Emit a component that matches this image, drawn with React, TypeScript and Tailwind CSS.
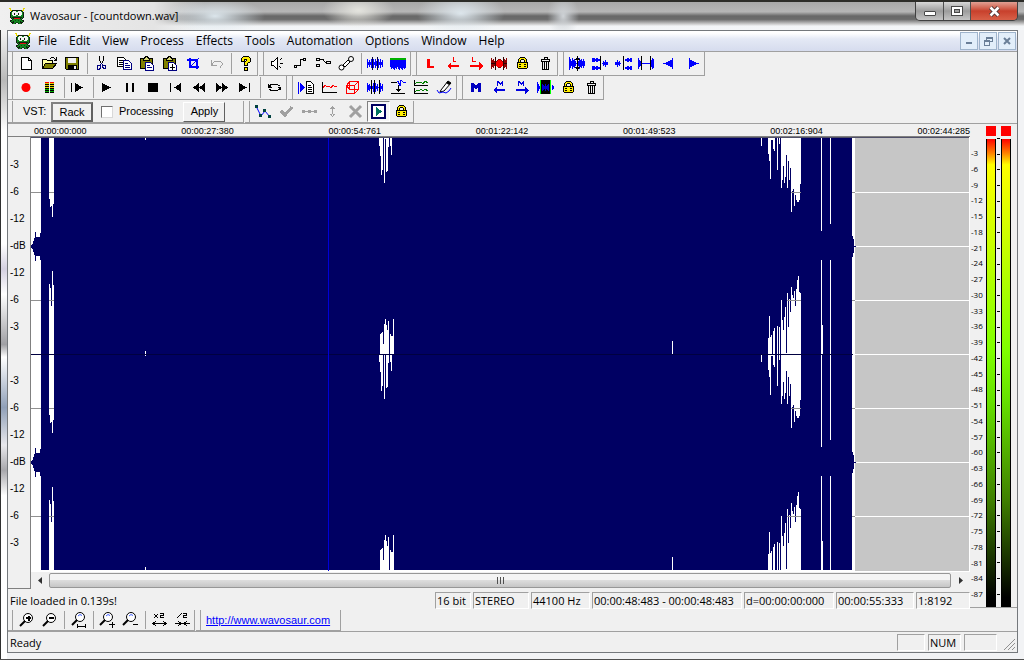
import type { ReactNode } from 'react'
import { clsx } from 'clsx'

const MENUS = [
  'File',
  'Edit',
  'View',
  'Process',
  'Effects',
  'Tools',
  'Automation',
  'Options',
  'Window',
  'Help',
]

const TIMES = [
  '00:00:00:000',
  '00:00:27:380',
  '00:00:54:761',
  '00:01:22:142',
  '00:01:49:523',
  '00:02:16:904',
  '00:02:44:285',
]

const SCALE = ['-3', '-6', '-12', '-dB', '-12', '-6', '-3', '', '-3', '-6', '-12', '-dB', '-12', '-6', '-3']

const METER_LEVELS = Array.from({ length: 29 }, (_, i) => (i + 1) * -3)

const BLUE = '#0000ff'
const OLIVE = '#808000'
const RED = '#ff0000'

/* ---------- icons ---------- */

function Pixels({ rows, colors, x = 0, y = 0 }: { rows: string[]; colors: Record<string, string>; x?: number; y?: number }) {
  return (
    <g>
      {rows.flatMap((row, r) =>
        [...row].map((c, i) =>
          colors[c] ? <rect key={`${r}-${i}`} x={x + i} y={y + r} width="1" height="1" fill={colors[c]} /> : null,
        ),
      )}
    </g>
  )
}

// Column of vertical samples centred on y = 8
function Bars({ x, h, color = BLUE }: { x: number; h: number[]; color?: string }) {
  return (
    <g fill={color}>
      {h.map((v, i) => (
        <rect key={i} x={x + i} y={8 - v} width="1" height={v * 2 + 1} />
      ))}
    </g>
  )
}

const DINO_COLORS = { y: '#e8d800', k: '#102010', g: '#12851f', d: '#0a4a12', w: '#f4f4f4', r: '#e01010' }
const DINO = [
  'yy............yy',
  '.y............y.',
  '.yykkkkkkkkkkyy.',
  '..kgwwwggwwwgk..',
  '.kgwwwwwwwwwwgk.',
  '.kgwwkwwwkwwwgk.',
  '.kgwwkwwwkwwwgk.',
  '.kggwwwggwwwggk.',
  '.kggggggggggggk.',
  '.kgkkkkkkkkkkgk.',
  '..kgkrrrrrrkgk..',
  '...kggggggggk...',
  '.kkgggdggdgggkk.',
  '.kggkggggggkggk.',
  '..kkkggddggkkk..',
  '...kggk..kggk...',
]

function Dino() {
  return (
    <svg width="16" height="16" viewBox="0 0 16 16" shapeRendering="crispEdges" className="shrink-0" aria-hidden>
      <Pixels rows={DINO} colors={DINO_COLORS} />
    </svg>
  )
}

const clipboard = (
  <>
    <path d="M1.500 3.500h12v10h-12z" fill={OLIVE} stroke="#000" />
    <path d="M4.500 3.500h1l1-2h2l1 2h1v2h-6z" fill="#d8d87a" stroke="#000" />
    <path d="M6.500 7.500h5l3 3v5h-8z" fill="#fff" stroke="#000080" />
  </>
)

const trash = (
  <g fill="none" stroke="#000">
    <path d="M4 4.500h9M7 4V2.500h3V4M4.500 5v1.500h8V5M5.500 6.500v8h6v-8M7.500 7v7M9.500 7v7" />
  </g>
)

const LOCK = [
  '...kkkkk...',
  '..kyyyyyk..',
  '.kyykkkyyk.',
  '.kyk...kyk.',
  '.kyk...kyk.',
  'kkkkkkkkkkk',
  'kyyyyyyyyyk',
  'kykkyyykkyk',
  'kyyyyyyyyyk',
  'kykkyyykkyk',
  'kyyyyyyyyyk',
  '.kkkkkkkkk.',
]

const lock = <Pixels rows={LOCK} colors={{ k: '#000', y: '#ffee00' }} x={3} y={2} />

const lens = (cx: number, cy: number) => (
  <>
    <circle cx={cx} cy={cy} r="4.5" fill="#fff" stroke="#000" shapeRendering="auto" />
    <path d={`M${cx - 3} ${cy + 3}L${cx - 8} ${cy + 8}`} stroke="#000" strokeWidth="2" shapeRendering="auto" />
  </>
)

const lensGlint = (cx: number, cy: number) => (
  <path d={`M${cx - 2} ${cy - 1}l2-1.500 2 1`} fill="none" stroke="#4060ff" shapeRendering="auto" />
)

const ICONS: Record<string, ReactNode> = {
  new: <path d="M3.500 2.500h7l3 3v9h-10zM10.500 2.500v3h3" fill="#fff" stroke="#000" />,
  open: (
    <>
      <path d="M1.500 13.500v-9h4l1 1h5v3" fill="#ffffa0" stroke="#000" />
      <path d="M1.500 13.500l3-5h11l-4 5z" fill={OLIVE} stroke="#000" />
      <path d="M9 3.500h1M10 2.500h3M13 3.500h1M14 4.500h2M13 5.500h3M15.500 2v3" stroke="#000" fill="none" />
    </>
  ),
  save: (
    <>
      <path d="M1.500 2.500h13v12h-12l-1-1z" fill={OLIVE} stroke="#000" />
      <path d="M4 3h8v5H4z" fill="#f0f0f0" />
      <path d="M4 10h9v4H4z" fill="#000" />
      <path d="M10 11h2v3h-2z" fill="#f0f0f0" />
    </>
  ),
  cut: (
    <g fill="none">
      <path d="M6.500 1v4l1 2 1 2M10.500 1v4l-1 2-1 2" stroke="#000" />
      <path d="M8.500 8l-1 2h-2l-1 1v3h2l1-1v-3M8.500 8l1 2h2l1 1v2h-2l-1-1v-2" stroke="#000080" />
    </g>
  ),
  copy: (
    <>
      <path d="M1.500 2.500h6l2 2v7h-8z" fill="#fff" stroke="#000" />
      <path d="M3 5.500h4M3 7.500h4M3 9.500h4" stroke="#000" />
      <path d="M7.500 5.500h5l3 3v6h-8z" fill="#fff" stroke="#000080" />
      <path d="M9 8.500h3M9 10.500h5M9 12.500h5" stroke="#000080" />
    </>
  ),
  paste: (
    <>
      {clipboard}
      <path d="M8 10.500h3M8 12.500h5" stroke="#000080" />
    </>
  ),
  pasteNew: (
    <>
      {clipboard}
      <path d="M10.500 9v6M8 12.500h5" stroke="#000" />
    </>
  ),
  crop: (
    <>
      <path d="M5 3v9h9M2 5h10v9" fill="none" stroke={BLUE} strokeWidth="2" />
      <path d="M5 12L14 3" stroke={BLUE} />
    </>
  ),
  undo: <path d="M3.500 5v5h5M4 9.500l2-2.500 2-1h4l2 2v2l-2 2.500" fill="none" stroke="#a0a0a0" />,
  help: (
    <g stroke="#000" fill="#ffee00">
      <path d="M4.500 6.500v-3l2-2h5l2 2v3l-3 2v2h-3v-3l2-2v-1h-2v2zM7.500 12.500h3v3h-3z" />
    </g>
  ),
  speaker: (
    <>
      <path d="M2.500 6.500h2l4-4v12l-4-4h-2z" fill="#fff" stroke="#000" />
      <path d="M10.500 5.500l2-2M10.500 8.500h3M10.500 11.500l2 2" stroke="#000" />
    </>
  ),
  fadeIn: (
    <g fill="none" stroke="#000">
      <path d="M2.500 10.500h2v2h-2zM11.500 3.500h2v2h-2zM5 10.500h3.500v-6H11" />
    </g>
  ),
  fadeOut: (
    <g fill="none" stroke="#000">
      <path d="M1.500 3.500h3v2h-3zM1.500 9.500h3v2h-3zM5 4.500h3l2 2.500h2M11.500 6.500h4v2h-4z" />
    </g>
  ),
  chain: (
    <g fill="#fff" stroke="#000" shapeRendering="auto">
      <circle cx="3.500" cy="12.500" r="2.500" />
      <circle cx="13" cy="4" r="2.500" />
      <path d="M5 10l5-5 2 2-5 5z" />
    </g>
  ),
  wave1: (
    <>
      <Bars x={0} h={[4, 1, 3, 1, 4, 1, 4, 1, 4, 2, 1, 4, 1, 4, 1, 3]} />
      <path d="M5.500 2v13M10.500 2v13" stroke="#000040" />
    </>
  ),
  wave2: (
    <>
      <Bars x={0} h={[3, 5, 4, 5, 6, 4, 5, 3, 5, 6, 4, 5, 6, 4, 5, 4]} />
      <path d="M0 0h17v3H0z" fill="#f0f0f0" />
      <path d="M0 4h16" stroke="#00b000" strokeWidth="2" />
    </>
  ),
  l: <path d="M5 4h3v7h4v2H5z" fill={RED} />,
  lLeft: <path d="M8 2h1v4h2v1H8zM2 11l4-4v3h8v2H6v3z" fill={RED} />,
  lRight: <path d="M4 2h1v4h3v1H4zM15 11l-4-4v3H2v2h9v3z" fill={RED} />,
  waveCut: (
    <>
      <Bars x={0} h={[5, 3, 4, 2, 2, 2, 3, 4, 4, 4, 3, 2, 2, 4, 3, 5]} color="#900000" />
      <circle cx="8.500" cy="8.500" r="3.500" fill={RED} />
      <path d="M4.500 2v13M12.500 2v13M0 8.500h5M12 8.500h4" stroke="#300000" />
    </>
  ),
  lock,
  trash,
  zoomWave: (
    <>
      <Bars x={0} h={[6, 4, 2, 5, 3, 4, 2, 0, 0, 2, 5, 3, 4, 2, 4, 2]} />
      <path d="M8.500 1v15M7 3.500h3M6 4.500h5M7 13.500h3M6 12.500h5" stroke="#000" />
    </>
  ),
  spread: (
    <>
      <path d="M0 3h2v1h2v-1h1v1h2v1H5v1H4V5H2v1H0zM0 11h2v1h2v-1h1v1h2v1H5v1H4v-1H2v1H0z" fill={BLUE} stroke={BLUE} />
      <Bars x={10} h={[0, 2, 1, 3, 1, 1]} />
      <path d="M8.500 1v14" stroke="#000" />
    </>
  ),
  join: (
    <>
      <Bars x={0} h={[1, 1, 3, 1, 2, 0]} />
      <path d="M10 4h2v-1h1v1h2v-1h1v3h-1V5h-2v1h-1V5h-2zM10 12h2v-1h1v1h2v-1h1v3h-1v-1h-2v1h-1v-1h-2z" fill={BLUE} stroke={BLUE} />
      <path d="M8.500 1v14" stroke="#000" />
    </>
  ),
  between: (
    <>
      <Bars x={0} h={[5, 3, 2, 0, 0, 0, 0, 0, 0, 0, 0, 0, 2, 3, 5, 4]} />
      <path d="M3.500 1v14M12.500 1v14" stroke="#000" />
    </>
  ),
  prev: <path d="M2 8h3V7h2V6h2V5h2V3h1v11h-1v-2H9v-1H7v-1H5V9H2z" fill={BLUE} />,
  next: <path d="M15 8h-3V7h-2V6H8V5H6V3H5v11h1v-2h2v-1h2v-1h2V9h3z" fill={BLUE} />,
  record: <circle cx="8" cy="8.500" r="4.500" fill={RED} shapeRendering="auto" />,
  vu: (
    <g fill="none" strokeWidth="4">
      <path d="M6 3v11M11 3v11" stroke="#000" />
      <path d="M6 4v5M11 4v5" stroke="#e0d000" strokeDasharray="1 1" />
      <path d="M6 10v4M11 10v4" stroke="#00b000" strokeDasharray="1 1" />
      <path d="M6 3v1M11 3v1" stroke={RED} />
      <path d="M8.500 3v11" stroke="#f0f0f0" strokeWidth="1" />
    </g>
  ),
  playFrom: (
    <>
      <path d="M1.500 4v9" stroke="#000" />
      <path d="M5 4v9l8-4.500z" />
    </>
  ),
  play: <path d="M3 4v9l9-4.500z" />,
  pause: <path d="M4 4h2v9H4zM10 4h2v9h-2z" />,
  stop: <path d="M3 4h10v9H3z" />,
  toStart: <path d="M2 4h1v9H2zM13 4v9L6 8.500z" />,
  rewind: <path d="M8 4v9L2 8.500zM14 4v9L8 8.500z" />,
  forward: <path d="M2 4v9l6-4.500zM8 4v9l6-4.500z" />,
  toEnd: <path d="M2 4v9l8-4.500zM12 4h1v9h-1z" />,
  loop: (
    <g fill="none" stroke="#000">
      <path d="M3.500 7V6.500l2-1h6l2 1.500M13.500 10l-2 1.500h-6l-2-1" />
      <path d="M2 5v4h4zM15 12V8h-4z" fill="#000" stroke="none" />
    </g>
  ),
  insert: (
    <>
      <path d="M0 3h1v12H0zM2 4l5 4.500L2 13z" fill={BLUE} />
      <path d="M8.500 2.500h4l3 3v9h-7z" fill="#fff" stroke="#000" />
      <path d="M10 6.500h3M10 8.500h4M10 10.500h4M10 12.500h4" stroke="#000" />
    </>
  ),
  graph: (
    <>
      <path d="M1.500 3v10.500H16" fill="none" stroke="#000" />
      <path d="M2 9l2-3 2 2 2-1 2 2 2-3 2 2 2-1" fill="none" stroke={RED} />
    </>
  ),
  cube: (
    <path
      d="M5.500 2.500h9v8h-9zM2.500 6.500h8v8h-8zM2.500 6.500l3-4M10.500 6.500l4-4M2.500 6.500l3 4M10.500 14.500l4-4"
      fill="none"
      stroke={RED}
    />
  ),
  waves3: (
    <>
      <Bars x={0} h={[4, 2, 3, 1, 0, 1, 4, 0, 4, 1, 3, 0, 2, 4, 1, 3]} />
      <path d="M4.500 1v14M7.500 1v14M12.500 1v14" stroke="#000" />
    </>
  ),
  normalize: (
    <>
      <path d="M1 3.500h6M1 14.500h14M8.500 6v7M6 10.500h5M7 11.500h3" stroke="#000" />
      <path d="M7 3l1-1 2 5 1-6 2 2h3" fill="none" stroke={BLUE} />
    </>
  ),
  spectrum: (
    <>
      <path d="M1.500 1v5.500H15M1.500 9v5.500H15" fill="none" stroke="#000" />
      <path d="M2 5l2-2 2 1 2-1 2 2 2-3 3 2M2 13l2-2 2 1 2-2 2 2 2-2 3 2" fill="none" stroke="#008000" />
    </>
  ),
  pencil: (
    <g shapeRendering="auto">
      <path d="M5 11l7-9 3 2-7 8-4 1z" fill="#fff" stroke="#000" />
      <path d="M12 2l3 2-2 2-3-2z" />
      <path d="M1 11l2 3 4-1 3 1 3-2 2-3" fill="none" stroke={BLUE} />
    </g>
  ),
  m: <path d="M3 4h3l2 3 2-3h3v9h-3V8l-1 2H7L6 8v5H3z" fill="#0000c0" />,
  mLeft: <path d="M6 2h1l2 2 2-2h1v5h-1V4L9 6 7 4v3H6zM2 11l4-3v2h8v2H6v3z" fill="#0000e0" />,
  mRight: <path d="M4 2h1l2 2 2-2h1v5H9V4L7 6 5 4v3H4zM15 11l-4-3v2H2v2h9v3z" fill="#0000e0" />,
  selection: (
    <>
      <Bars x={0} h={[5, 3, 1]} />
      <path d="M3 1h10v14H3z" fill="#000" />
      <Bars x={5} h={[3, 2, 1, 3, 1, 2, 3]} color="#0000d0" />
      <path d="M3.500 1v14M13.500 1v14" stroke="#00ff00" />
      <Bars x={15} h={[2, 1]} />
    </>
  ),
  envelope: (
    <>
      <path d="M1 3l5 10 4-5 5 6" fill="none" stroke={BLUE} shapeRendering="auto" />
      <path d="M0 2h3v3H0zM4 11h3v3H4zM8 6h3v3H8zM13 12h3v3h-3z" fill="#004040" />
    </>
  ),
  check: <path d="M3 8l4 4 7-8" fill="none" stroke="#a0a0a0" strokeWidth="3" />,
  dots: <path d="M1 7h3v3H1zM7 7h3v3H7zM13 7h3v3h-3zM4 8h9v1H4z" fill="#a0a0a0" />,
  updown: <path d="M8 4h1v9H8zM5 6l3.500-3L12 6zM5 11l3.500 3 3.500-3z" fill="#a0a0a0" />,
  cross: <path d="M3 3l11 11M14 3L3 14" stroke="#a0a0a0" strokeWidth="3" shapeRendering="auto" />,
  playBox: (
    <>
      <path d="M2 2h13v13H2z" fill="#fff" stroke="#000060" strokeWidth="2" />
      <path d="M6 4v9l6-4.500z" fill="#007060" />
    </>
  ),
  zoomIn: (
    <>
      {lens(10, 6)}
      <path d="M8 6h5M10.500 4v5" stroke="#000" strokeWidth="2" />
    </>
  ),
  zoomOut: (
    <>
      {lens(10, 6)}
      <path d="M8 6h5" stroke="#000" strokeWidth="2" />
    </>
  ),
  zoomSel: (
    <>
      {lens(10, 5)}
      {lensGlint(10, 5)}
      <path d="M7.500 12v4M15.500 12v4M8 14h8" stroke="#000" strokeWidth="1" />
    </>
  ),
  zoomVIn: (
    <>
      {lens(9, 5)}
      {lensGlint(9, 5)}
      <path d="M10 12.500h6M13.500 10v6" stroke="#000" />
    </>
  ),
  zoomVOut: (
    <>
      {lens(9, 5)}
      {lensGlint(9, 5)}
      <path d="M11 12.500h5" stroke="#000" />
    </>
  ),
  x2: (
    <g fill="none" stroke="#000">
      <path d="M3 2l4 4M7 2L3 6M9 1.500h3.500v2H9.500v2H13M2 11.500h13M5 9l-3 2.500L5 14M12 9l3 2.500L12 14" />
    </g>
  ),
  half: (
    <g fill="none" stroke="#000">
      <path d="M3 6l5-5M9 1.500h3.500v2H9.500v2H13M1 11.500h15M4 9l3 2.500L4 14M13 9l-3 2.500 3 2.500" />
    </g>
  ),
}

/* ---------- toolbars ---------- */

function ToolButton({ name, pressed }: { name: string; pressed?: boolean }) {
  return (
    <button
      type="button"
      aria-label={name}
      className={clsx(
        'flex h-full w-[23px] shrink-0 items-center justify-center',
        pressed && 'border border-r-white border-b-white border-l-[#808080] border-t-[#808080] bg-[#f6f6f6]',
      )}
    >
      <svg width="17" height="17" viewBox="0 0 17 17" shapeRendering="crispEdges" className="shrink-0" aria-hidden>
        {ICONS[name]}
      </svg>
    </button>
  )
}

function Group({ items, children }: { items?: string[]; children?: ReactNode }) {
  return (
    <div className="mr-px flex h-full border-r border-b border-[#a0a0a0]">
      <div className="w-[7px] shrink-0 pl-[2px]">
        <div className="h-full w-[3px] border-r border-[#a0a0a0]" />
      </div>
      {items?.map((item, i) =>
        item === '|' ? (
          <div key={i} className="flex w-[6px] justify-center py-px">
            <div className="w-px bg-[#a0a0a0]" />
          </div>
        ) : (
          <ToolButton key={i} name={item} pressed={item === 'playBox'} />
        ),
      )}
      {children}
    </div>
  )
}

function Toolbars() {
  return (
    <div className="border-b border-[#a0a0a0]">
      <div className="flex h-6">
        <Group items={['new', 'open', 'save', '|', 'cut', 'copy', 'paste', 'pasteNew', 'crop', 'undo', '|', 'help']} />
        <Group items={['speaker', 'fadeIn', 'fadeOut', 'chain', '|', 'wave1', 'wave2']} />
        <Group items={['l', 'lLeft', 'lRight', 'waveCut', 'lock', 'trash']} />
        <Group items={['zoomWave', 'spread', 'join', 'between', 'prev', 'next']} />
      </div>
      <div className="flex h-6">
        <Group
          items={['record', 'vu', '|', 'playFrom', '|', 'play', 'pause', 'stop', 'toStart', 'rewind', 'forward', 'toEnd', '|', 'loop']}
        />
        <Group items={['insert', 'graph', 'cube', 'waves3', 'normalize', 'spectrum', 'pencil']} />
        <Group items={['m', 'mLeft', 'mRight', 'selection', 'lock', 'trash']} />
      </div>
      <div className="flex h-[23px] pt-px">
        <Group>
          <div className="flex w-[228px] items-center pl-2 font-['Liberation_Sans',sans-serif] text-[11px]">
            <span className="w-[28px]">VST:</span>
            <button
              type="button"
              className="h-5 w-[42px] border-2 border-t-[#808080] border-r-[#606060] border-b-[#606060] border-l-[#808080] bg-[#f0f0f0]"
            >
              Rack
            </button>
            <label className="ml-2 flex items-center gap-[6px]">
              <input
                type="checkbox"
                className="h-3 w-3 appearance-none border border-t-[#707070] border-r-[#d8d8d8] border-b-[#d8d8d8] border-l-[#707070] bg-white"
              />
              Processing
            </label>
            <button
              type="button"
              className="ml-[10px] h-5 w-[42px] border border-t-white border-r-[#606060] border-b-[#606060] border-l-white bg-[#f0f0f0]"
            >
              Apply
            </button>
          </div>
        </Group>
        <Group items={['envelope', 'check', 'dots', 'updown', 'cross', 'playBox', 'lock']} />
      </div>
    </div>
  )
}

/* ---------- waveform ---------- */

// Silent gaps in one channel (216 units tall): [x, end of the upper gap, start of the lower gap]
const GAPS: [number, number, number][] = [
  [49, 61, 146],
  [50, 69, 150],
  [51, 68, 168],
  [52, 79, 133],
  [53, 66, 147],
  [145, 2, 213],
  [379, 8, 216],
  [380, 18, 196],
  [381, 37, 195],
  [382, 32, 194],
  [383, 0, 206],
  [384, 45, 186],
  [385, 1, 181],
  [386, 34, 187],
  [387, 33, 192],
  [388, 9, 183],
  [390, 8, 196],
  [391, 17, 198],
  [392, 0, 198],
  [393, 0, 181],
  [672, 0, 203],
  [761, 8, 216],
  [768, 16, 200],
  [769, 23, 178],
  [770, 41, 199],
  [771, 2, 197],
  [772, 2, 216],
  [773, 11, 193],
  [774, 13, 190],
  [777, 32, 188],
  [779, 6, 189],
  [781, 50, 162],
  [782, 42, 182],
  [783, 28, 192],
  [784, 45, 179],
  [785, 39, 169],
  [786, 17, 215],
  [787, 50, 155],
  [788, 23, 189],
  [789, 42, 161],
  [790, 30, 174],
  [791, 74, 149],
  [792, 53, 157],
  [793, 51, 160],
  [794, 68, 153],
  [795, 57, 168],
  [796, 62, 151],
  [797, 64, 142],
  [798, 64, 138],
  [799, 62, 154],
  [800, 46, 155],
  [821, 93, 122],
  [822, 0, 187],
  [830, 86, 122],
]

const INTRO = [1, 2, 5, 8, 14, 9, 9, 9, 9, 13]

function Channel({ top }: { top: number }) {
  return (
    <g transform={`translate(0 ${top})`}>
      <rect x="41" y="0" width="811" height="216" fill="#000063" />
      <rect x="852" y="98" width="1" height="21" fill="#000063" />
      <rect x="853" y="101" width="1" height="14" fill="#000063" />
      <rect x="854" y="108" width="2" height="1" fill="#000063" />
      {INTRO.map((v, i) => (
        <rect key={i} x={31 + i} y={108 - v} width="1" height={v * 2 + 1} fill="#000063" />
      ))}
      {GAPS.map(([x, up, down]) => (
        <g key={x} fill="#fff">
          <rect x={x} y="0" width="1" height={up} />
          <rect x={x} y={down} width="1" height={216 - down} />
        </g>
      ))}
      <path d="M31 54.500h10M49 54.500h5M791 54.500h10M852 54.500h3M31 162.500h10M49 162.500h5M787 162.500h14M852 162.500h3" stroke="#909090" />
    </g>
  )
}

function Waveform() {
  return (
    <svg
      viewBox="31 137 939 435"
      preserveAspectRatio="none"
      shapeRendering="crispEdges"
      className="block min-h-0 w-full flex-1"
      role="img"
      aria-label="Stereo waveform"
    >
      <rect x="31" y="137" width="939" height="435" fill="#fff" />
      <rect x="855" y="137" width="114" height="434" fill="#c6c6c6" />
      <path
        d="M855 192.500h114M855 246.500h114M855 300.500h114M855 354.500h114M855 408.500h114M855 462.500h114M855 516.500h114"
        stroke="#fff"
      />
      <Channel top={138} />
      <Channel top={354} />
      <path d="M31 354.500h822" stroke="#000040" />
      <path d="M328.500 138v433" stroke="#0000d8" />
      <path d="M31 137.500h938" stroke="#505068" />
    </svg>
  )
}

function ScrollBar() {
  return (
    <div className="flex h-[17px] shrink-0 items-center bg-[#f0f0f0] pb-px">
      <button type="button" aria-label="Scroll left" className="flex w-[18px] justify-center">
        <svg width="4" height="7" viewBox="0 0 4 7" aria-hidden>
          <path d="M4 0v7L0 3.500z" fill="#303030" />
        </svg>
      </button>
      <div className="flex h-[15px] flex-1 items-center justify-center gap-[2px] rounded-[2px] border border-[#979797] bg-linear-to-b from-[#f4f4f4] from-45% via-[#dcdcdc] via-50% to-[#c6c6c6]">
        <div className="h-[7px] w-px bg-[#505050]" />
        <div className="h-[7px] w-px bg-[#505050]" />
        <div className="h-[7px] w-px bg-[#505050]" />
      </div>
      <button type="button" aria-label="Scroll right" className="flex w-[19px] justify-center">
        <svg width="4" height="7" viewBox="0 0 4 7" aria-hidden>
          <path d="M0 0v7l4-3.500z" fill="#303030" />
        </svg>
      </button>
    </div>
  )
}

function InfoCell({ className, children }: { className?: string; children?: ReactNode }) {
  return (
    <div
      className={clsx(
        'h-[17px] shrink-0 overflow-hidden border border-t-[#a0a0a0] border-r-white border-b-white border-l-[#a0a0a0] pl-px leading-[16px] whitespace-nowrap',
        className,
      )}
    >
      {children}
    </div>
  )
}

/* ---------- level meter ---------- */

function MeterBar() {
  return (
    <div className="flex w-[10px] flex-col gap-[3px]">
      <div className="h-[10px] bg-[#ff0000]" />
      <div className="flex-1 border-x border-black bg-[linear-gradient(#ff0000,#ff8000_3%,#ffff00_5.5%,#80ff00_45%,#66e000_56%,#408000_77%,#000_98%)]" />
    </div>
  )
}

function Meter() {
  return (
    <div className="mb-px flex w-[47px] shrink-0 border-b border-[#a0a0a0] pt-[2px] pl-px text-[8px] leading-[10px]">
      <div className="flex w-[15px] flex-col justify-between pt-[22px] pb-[8px]">
        {METER_LEVELS.map((level) => (
          <span key={level}>{level}</span>
        ))}
      </div>
      <MeterBar />
      <div className="flex w-[5px] flex-col items-center justify-between pt-[12px] pb-[12px]">
        {[0, ...METER_LEVELS].map((level) => (
          <div key={level} className="h-px w-[3px] bg-black" />
        ))}
      </div>
      <MeterBar />
    </div>
  )
}

/* ---------- window chrome ---------- */

function TitleBar() {
  return (
    <header className="flex h-[30px] items-start border-t-2 border-[#2c2c28] bg-[radial-gradient(50px_18px_at_21%_50%,#dce6ec_0%,transparent_100%),radial-gradient(36px_18px_at_35%_30%,#e4e4de_0%,transparent_100%),radial-gradient(44px_22px_at_45%_40%,#dde6ec_0%,transparent_100%),radial-gradient(16px_22px_at_55%_50%,#d0d4d8_0%,transparent_100%),linear-gradient(90deg,#f0f0f0_0%,#e4e4e4_15%,transparent_20%),linear-gradient(#a8a8a8,#b6b6b6_35%,#686868_50%,#6c6c6c_62%,#c8c8c8_78%,#f2f4f6_86%,#f4f6f8)] pl-[9px]">
      <div className="flex items-center gap-[5px] pt-[6px]">
        <Dino />
        <h1 className="text-[11px] leading-[16px]">Wavosaur - [countdown.wav]</h1>
      </div>
      <div className="mr-[6px] ml-auto flex h-[19px] overflow-hidden rounded-b-[5px] border border-t-0 border-[#404040]">
        <button
          type="button"
          aria-label="Minimize"
          className="flex w-7 items-center justify-center border-r border-[#505050] bg-linear-to-b from-[#d8d8d8] via-[#9c9c9c] via-50% to-[#c4c4c4]"
        >
          <span className="mt-1 h-[5px] w-3 rounded-[1px] border border-[#484848] bg-white" />
        </button>
        <button
          type="button"
          aria-label="Maximize"
          className="flex w-[27px] items-center justify-center border-r border-[#505050] bg-linear-to-b from-[#d8d8d8] via-[#9c9c9c] via-50% to-[#c4c4c4]"
        >
          <svg width="12" height="10" viewBox="0 0 12 10" shapeRendering="crispEdges" aria-hidden>
            <path d="M.5.500h11v9H.5z" fill="#fff" stroke="#484848" />
            <path d="M3.500 3.500h5v3h-5z" fill="#a0a0a0" stroke="#484848" />
          </svg>
        </button>
        <button
          type="button"
          aria-label="Close"
          className="flex w-[46px] items-center justify-center bg-linear-to-b from-[#e0a094] via-[#c8402c] via-50% to-[#d86048]"
        >
          <svg width="13" height="11" viewBox="0 0 13 11" aria-hidden>
            <path d="M2.500 1.500l8 8M10.500 1.500l-8 8" stroke="#503838" strokeWidth="4.500" />
            <path d="M2.500 1.500l8 8M10.500 1.500l-8 8" stroke="#fff" strokeWidth="2.500" />
          </svg>
        </button>
      </div>
    </header>
  )
}

const MDI_BUTTON = 'flex h-[18px] w-[18px] items-center justify-center border border-[#9fb4cc] bg-[#e2eefa]'

function MenuBar() {
  return (
    <nav className="flex h-[21px] shrink-0 items-center border-b border-[#a0a0a0] bg-linear-to-b from-white from-10% via-[#e4e9f5] via-40% to-[#d6dcee] pr-px pl-[7px]">
      <Dino />
      <div className="ml-[7px] flex gap-3">
        {MENUS.map((menu) => (
          <button key={menu} type="button" className="text-[12px] leading-[18px]">
            {menu}
          </button>
        ))}
      </div>
      <div className="ml-auto flex gap-px">
        <button type="button" aria-label="Minimize document" className={MDI_BUTTON}>
          <span className="mt-1 h-[2px] w-[6px] bg-[#6a7f98]" />
        </button>
        <button type="button" aria-label="Restore document" className={MDI_BUTTON}>
          <svg width="9" height="9" viewBox="0 0 9 9" shapeRendering="crispEdges" fill="none" stroke="#6a7f98" aria-hidden>
            <path d="M2.500 3V.500h6v4H6M2 1.500h7M.500 3.500h5v5h-5zM0 4.500h6" />
          </svg>
        </button>
        <button type="button" aria-label="Close document" className={MDI_BUTTON}>
          <svg width="8" height="8" viewBox="0 0 8 8" aria-hidden>
            <path d="M1 1l6 6M7 1L1 7" stroke="#6a7f98" strokeWidth="2" />
          </svg>
        </button>
      </div>
    </nav>
  )
}

export default function App() {
  return (
    <div className="flex h-screen min-h-[400px] flex-col overflow-hidden bg-[#eceef0] font-['Open_Sans','Noto_Sans',sans-serif] text-black">
      <TitleBar />
      <div className="flex min-h-0 flex-1 border-b border-[#505050] bg-[#f2f3f5] bg-[linear-gradient(#f4f4f4,#b8b8b8_8%,#fff_16%,#fff_34%,#d4d0e0_38%,#fff_42%,#a0a0a4_50%,#fff_52%,#90a0b8_60%,#e8e8ec_66%,#a8a8ac_70%,#fff_74%,#fff)] bg-[length:7px_100%] bg-no-repeat pr-[6px] pb-[6px] pl-[6px] shadow-[inset_1px_0_0_#303030]">
        <main className="ml-px flex min-w-0 flex-1 flex-col border border-[#74787c] bg-[#f0f0f0]">
          <MenuBar />
          <Toolbars />
          <div className="flex min-h-0 flex-1">
            <div className="flex min-w-0 flex-1 flex-col">
              <div className="flex h-[13px] shrink-0 justify-between border-b border-[#808080] pl-[26px] font-['Liberation_Sans',sans-serif] text-[9px] leading-[14px]">
                {TIMES.map((time) => (
                  <span key={time}>{time}</span>
                ))}
              </div>
              <div className="flex min-h-0 flex-1">
                <div className="w-[23px] shrink-0 border-r border-b border-[#808080] pt-[14px] pl-[2px] font-['Liberation_Sans',sans-serif] text-[10px]">
                  {SCALE.map((label, i) => (
                    <div key={i} className="h-[27px] leading-[27px]">
                      {label}
                    </div>
                  ))}
                </div>
                <div className="flex min-w-0 flex-1 flex-col">
                  <Waveform />
                  <ScrollBar />
                </div>
              </div>
              <div className="flex h-5 shrink-0 items-end gap-[2px] pl-[2px] text-[11px] leading-[16px]">
                <span className="flex-1">File loaded in 0.139s!</span>
                <InfoCell className="w-[36px]">16 bit</InfoCell>
                <InfoCell className="w-[56px]">STEREO</InfoCell>
                <InfoCell className="w-[59px]">44100 Hz</InfoCell>
                <InfoCell className="w-[150px]">00:00:48:483 - 00:00:48:483</InfoCell>
                <InfoCell className="w-[90px]">d=00:00:00:000</InfoCell>
                <InfoCell className="w-[78px]">00:00:55:333</InfoCell>
                <InfoCell className="w-[54px]">1:8192</InfoCell>
              </div>
            </div>
            <Meter />
          </div>
          <div className="flex h-[23px] shrink-0 border-b border-[#a0a0a0] pt-px">
            <Group items={['zoomIn', 'zoomOut', '|', 'zoomSel', '|', 'zoomVIn', 'zoomVOut', '|', 'x2', 'half']} />
            <Group>
              <a
                href="http://www.wavosaur.com"
                className="flex w-[137px] items-center pl-[3px] font-['Liberation_Sans',sans-serif] text-[11px] text-[#0000ff] underline"
              >
                http://www.wavosaur.com
              </a>
            </Group>
          </div>
          <footer className="flex h-5 shrink-0 items-end gap-[3px] pb-px pl-[2px] text-[11px] leading-[16px]">
            <span className="flex-1">Ready</span>
            <InfoCell className="w-[28px]" />
            <InfoCell className="w-[33px]">NUM</InfoCell>
            <InfoCell className="w-[33px]" />
            <svg width="17" height="17" viewBox="0 0 17 17" stroke="#909090" aria-hidden>
              <path d="M4 16L15 5M8 16l7-7M12 16l3-3" />
            </svg>
          </footer>
        </main>
      </div>
    </div>
  )
}
